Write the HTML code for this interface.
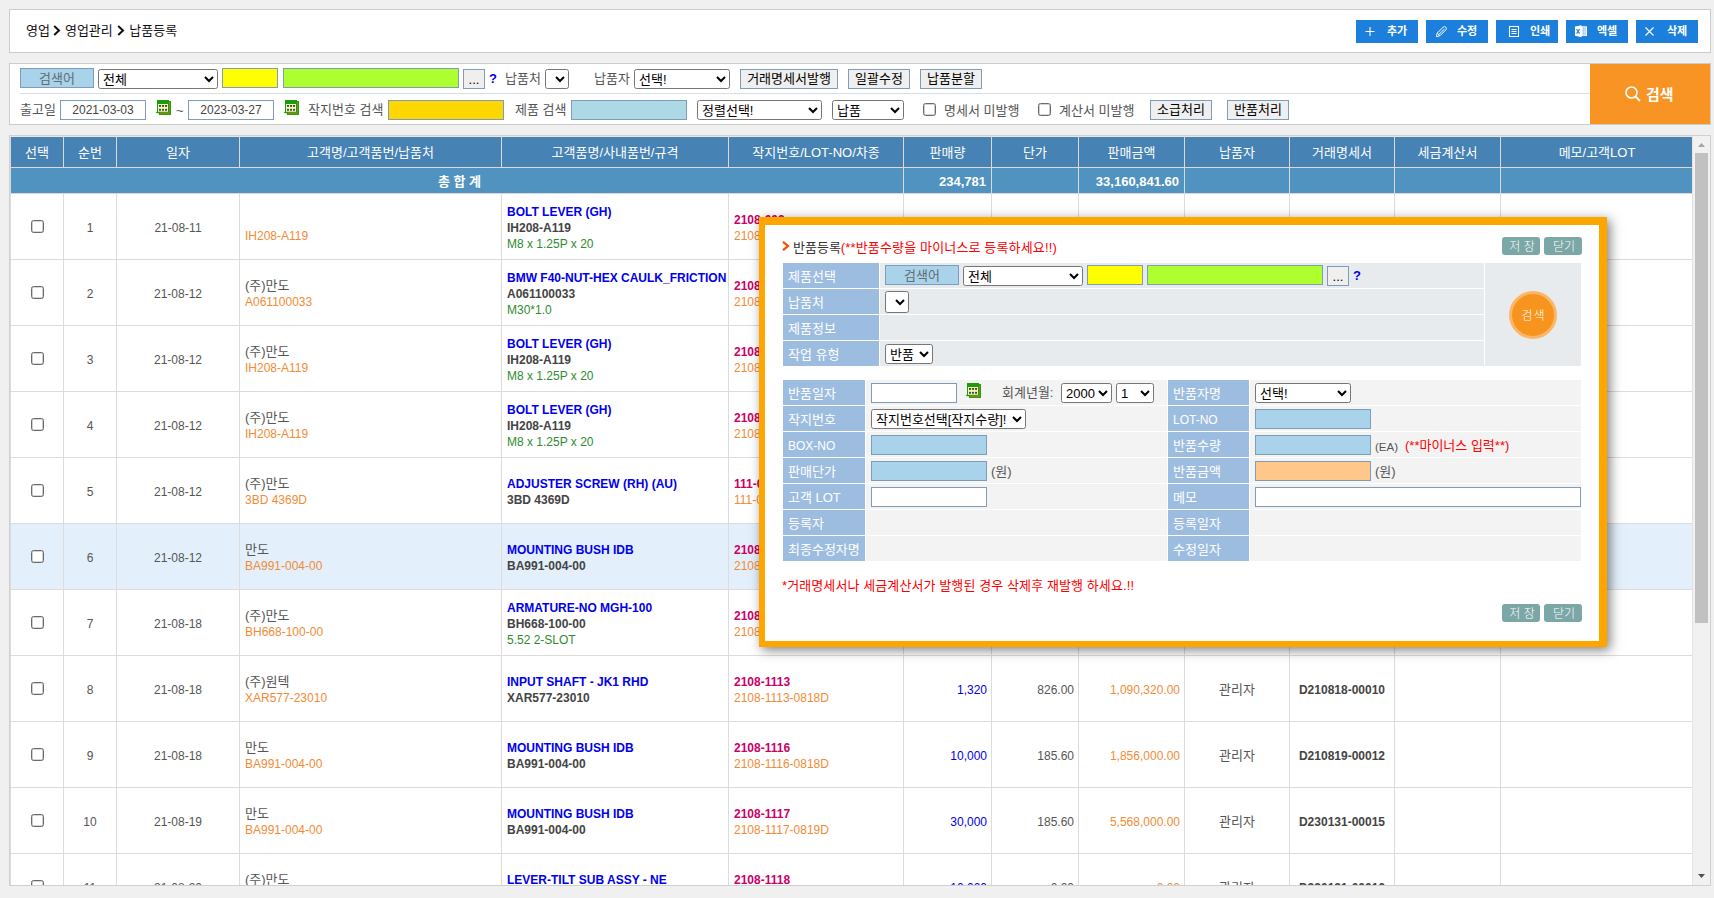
<!DOCTYPE html>
<html lang="ko">
<head>
<meta charset="utf-8">
<title>납품등록</title>
<style>
*{box-sizing:border-box;}
html,body{margin:0;padding:0;}
body{width:1714px;height:898px;overflow:hidden;background:#f0f0f0;position:relative;
 font-family:"Liberation Sans","Noto Sans CJK KR",sans-serif;font-size:12px;color:#333;}
.abs{position:absolute;}
/* top bar */
#topbar{left:9px;top:9px;width:1702px;height:44px;background:#fff;border:1px solid #ccc;}
#crumb{left:16px;top:13px;font-size:13px;color:#111;white-space:nowrap;line-height:16px;}
#crumb svg{vertical-align:-1px;margin:0 4px 0 3px;}
.tbtn{position:absolute;top:10px;width:62px;height:23px;background:#1b7fdb;color:#fff;font-size:11px;font-weight:bold;line-height:23px;white-space:nowrap;}
.tbtn svg{position:absolute;left:0;top:0;}
.tbtn span{position:absolute;left:30px;top:0;}
/* search panel */
#search{left:9px;top:63px;width:1702px;height:62px;background:#fff;border:1px solid #ccc;}
#search .line{position:absolute;left:10px;width:1570px;top:29px;height:1px;background:#d5dde5;}
#sbtn{left:1590px;top:64px;width:120px;height:60px;background:#f89424;color:#fff;font-weight:bold;font-size:15px;}
.lbl{position:absolute;background:#a8d3ea;border:1px solid #7f9db9;color:#636b72;text-align:center;font-size:13px;}
.inp{position:absolute;border:1px solid #7f9db9;background:#fff;font-size:12px;text-align:center;color:#444;}
select{position:absolute;font-family:inherit;font-size:13px;color:#000;background:#fff;border:1px solid #767676;border-radius:2.5px;padding:0;margin:0;}
.txt{position:absolute;white-space:nowrap;font-size:13px;color:#555;line-height:16px;}
.gbtn{position:absolute;background:#efefef;border:1px solid #7f9db9;font-size:13px;color:#000;text-align:center;white-space:nowrap;}
input[type=checkbox]{position:absolute;margin:0;width:13px;height:13px;-webkit-appearance:none;appearance:none;border:1px solid #6a6a6a;border-radius:2.5px;background:#fff;box-shadow:inset 0 0 0 .6px rgba(106,106,106,.55);}
input.cb{position:relative;top:-2px;vertical-align:middle;}
table.grid .k,.k{font-size:13px;}
/* grid */
#gridwrap{left:9px;top:135px;width:1702px;height:751px;background:#fff;border:1px solid #d0d0d0;overflow:hidden;}
table.grid{position:absolute;left:0;top:0;border-collapse:collapse;table-layout:fixed;width:1683px;}
table.grid th{background:#4682b4;color:#fff;font-weight:normal;font-size:13px;height:31px;border:1px solid #d9d9d9;border-top:1px solid #e8e8e8;padding:0 0 2px 0;}
table.grid tr.sum td{background:#5193c0;color:#fff;font-weight:bold;font-size:13px;height:26px;border:1px solid #d9d9d9;padding:2px 5px 0 0;text-align:right;}
table.grid tr.sum td.c{text-align:center;padding-left:10px;}
table.grid td{height:66px;border:1px solid #dcdcdc;padding:2px 5px 0 5px;font-size:12px;line-height:16px;color:#555;vertical-align:middle;white-space:nowrap;overflow:hidden;}
table.grid td.c{text-align:center;}
table.grid td.r{text-align:right;padding-right:4px;}
tr.hl td{background:#e3f0fb;}
table.grid .or,.or{color:#f28b36;}
table.grid .bl,.bl{color:#0000ee;font-weight:bold;}
table.grid .bk,.bk{color:#444;font-weight:bold;}
table.grid .gr,.gr{color:#2e8b2e;}
table.grid .rd,.rd{color:#cc0066;font-weight:bold;}
table.grid .qb,.qb{color:#0000ee;}
/* scrollbar */
#sb{left:1692px;top:136px;width:18px;height:749px;background:#f1f1f1;border-left:1px solid #e4e4e4;}
#sb .thumb{position:absolute;left:2px;top:17px;width:13px;height:470px;background:#c1c1c1;}
#sb svg{position:absolute;left:5px;}
/* modal */
#modal{left:759px;top:217px;width:848px;height:430px;background:#fff;border-style:solid;border-color:#ffa500;border-width:8px 8px 6px 6px;box-shadow:3px 3px 11px rgba(0,0,0,.5);}
#modal .in{position:absolute;left:-765px;top:-225px;width:0;height:0;font-family:"Liberation Sans","Noto Sans CJK KR",sans-serif;}
.ml{position:absolute;background:#9dbde0;color:#fff;font-size:13px;padding-left:5px;padding-top:1px;white-space:nowrap;overflow:hidden;}
.mc{position:absolute;background:#e8ebee;}
.mc2{position:absolute;background:#f3f3f3;}
.mbtn{position:absolute;width:38px;height:18px;background:#7ba7a7;border-radius:3px;color:#fff;font-size:12px;font-weight:300;line-height:20px;text-align:center;white-space:nowrap;padding-left:2px;overflow:hidden;}
.mt{font-size:13px;color:#333;white-space:nowrap;line-height:18px;}
.circ{width:48px;height:48px;border-radius:50%;background:#f7941d;border:3px solid #fbb768;color:#fff;font-size:12px;font-weight:300;letter-spacing:1px;padding-left:1px;line-height:44px;text-align:center;white-space:nowrap;}
</style>
</head>
<body>
<svg width="0" height="0" style="position:absolute"><defs>
<g id="calico">
 <rect x="4.5" y="1.5" width="11" height="13" fill="#7c8f1c" stroke="#2f9a0c" stroke-width="1"/>
 <path d="M0.6 13 L2.2 11.2 L5 12 L5 13.4 Z" fill="#2f9a0c"/>
 <rect x="2" y="0" width="12" height="12.3" fill="#1f9a08"/>
 <rect x="3" y="4" width="10" height="7.8" fill="#eef0c0"/>
 <g fill="#2c3a0c"><rect x="4.1" y="5" width="1.8" height="1.8"/><rect x="7.1" y="5" width="1.8" height="1.8"/><rect x="10.1" y="5" width="1.8" height="1.8"/><rect x="4.1" y="8.9" width="1.8" height="1.8"/><rect x="7.1" y="8.9" width="1.8" height="1.8"/><rect x="10.1" y="8.9" width="1.8" height="1.8"/></g>
</g></defs></svg>
<!-- TOPBAR -->
<div id="topbar" class="abs">
 <div id="crumb" class="abs">영업<svg width="8" height="11" viewBox="0 0 8 11"><path d="M1.2 1 L6 5.5 L1.2 10" fill="none" stroke="#111" stroke-width="2"/></svg>영업관리<svg style="margin-left:4.5px" width="8" height="11" viewBox="0 0 8 11"><path d="M1.2 1 L6 5.5 L1.2 10" fill="none" stroke="#111" stroke-width="2"/></svg>납품등록</div>
 <div class="tbtn" style="left:1346px"><svg width="62" height="23"><path d="M9.5 11.5h9M14 7v9" stroke="#fff" stroke-width="1.1" fill="none"/></svg><span style="left:31px">추가</span></div>
 <div class="tbtn" style="left:1416px"><svg width="62" height="23"><g fill="none" stroke="#fff" stroke-width="1"><path d="M10.5 15.5 L11.3 13 L17.3 7 Q18.5 6 19.8 7.2 Q21 8.5 20 9.7 L14 15.7 L10.5 16.6 Z"/><path d="M12.8 14.6 L18.6 8.8"/><path d="M11.3 13.2 L13.9 15.6"/></g></svg><span style="left:31px">수정</span></div>
 <div class="tbtn" style="left:1486px"><svg width="62" height="23"><g fill="none" stroke="#fff" stroke-width="1.1"><rect x="13.5" y="6.5" width="9" height="10"/><path d="M15.5 9.5h5M15.5 11.5h5M15.5 13.5h5" stroke-width="1"/></g></svg><span style="left:34px">인쇄</span></div>
 <div class="tbtn" style="left:1556px"><svg width="62" height="23"><g><path d="M9 6.6 L15.5 5.2 V17.2 L9 15.8 Z" fill="#fff"/><path d="M10.6 9 L13.6 13.6 M13.6 9 L10.6 13.6" stroke="#1b7fdb" stroke-width="1.1" fill="none"/><rect x="15.5" y="6.8" width="5" height="8.8" fill="#fff" stroke="#fff" stroke-width="0.9"/><path d="M17.2 7v8.4M19 7v8.4" stroke="#5a9fe6" stroke-width="0.7"/></g></svg><span style="left:31px">엑셀</span></div>
 <div class="tbtn" style="left:1626px"><svg width="62" height="23"><path d="M9.5 7.5l8 8M17.5 7.5l-8 8" stroke="#fff" stroke-width="1.1" fill="none"/></svg><span style="left:31px">삭제</span></div>
</div>
<!-- SEARCH -->
<div id="search" class="abs"><div class="line"></div></div>
<div id="sbtn" class="abs"><svg class="abs" style="left:34px;top:21px" width="18" height="18" viewBox="0 0 18 18"><circle cx="7.5" cy="7.5" r="5.5" fill="none" stroke="#fff" stroke-width="1.6"/><path d="M11.5 11.5 L16 16" stroke="#fff" stroke-width="1.8"/></svg><span class="abs" style="left:56px;top:21px;line-height:20px;white-space:nowrap">검색</span></div>
<div id="sf" class="abs" style="left:0;top:0;width:0;height:0">
 <div class="lbl" style="left:20px;top:68px;width:74px;height:20px;line-height:20px">검색어</div>
 <select style="left:98px;top:69px;width:120px;height:20px"><option>전체</option></select>
 <div class="inp" style="left:222px;top:68px;width:56px;height:20px;background:#ffff00"></div>
 <div class="inp" style="left:283px;top:68px;width:176px;height:20px;background:#adff2f"></div>
 <div class="gbtn" style="left:463px;top:69px;width:22px;height:20px;line-height:20px">...</div>
 <div class="txt qb" style="left:489px;top:71px;font-weight:bold">?</div>
 <div class="txt" style="left:505px;top:71px">납품처</div>
 <select style="left:545px;top:69px;width:24px;height:20px"><option></option></select>
 <div class="txt" style="left:594px;top:71px">납품자</div>
 <select style="left:634px;top:69px;width:96px;height:20px"><option>선택!</option></select>
 <div class="gbtn" style="left:740px;top:69px;width:98px;height:20px;line-height:18px">거래명세서발행</div>
 <div class="gbtn" style="left:848px;top:69px;width:62px;height:20px;line-height:18px">일괄수정</div>
 <div class="gbtn" style="left:920px;top:69px;width:62px;height:20px;line-height:18px">납품분할</div>

 <div class="txt" style="left:20px;top:102px">출고일</div>
 <div class="inp" style="left:60px;top:100px;width:86px;height:20px;line-height:19px">2021-03-03</div>
 <svg class="abs cal" style="left:155px;top:100px" width="17" height="16" viewBox="0 0 17 16"><use href="#calico"/></svg>
 <div class="txt" style="left:176px;top:103px">~</div>
 <div class="inp" style="left:188px;top:100px;width:86px;height:20px;line-height:19px">2023-03-27</div>
 <svg class="abs cal" style="left:283px;top:100px" width="17" height="16" viewBox="0 0 17 16"><use href="#calico"/></svg>
 <div class="txt" style="left:308px;top:102px">작지번호 검색</div>
 <div class="inp" style="left:388px;top:100px;width:116px;height:20px;background:#ffd700"></div>
 <div class="txt" style="left:515px;top:102px">제품 검색</div>
 <div class="inp" style="left:571px;top:100px;width:116px;height:20px;background:#add8e6"></div>
 <select style="left:697px;top:100px;width:125px;height:20px"><option>정렬선택!</option></select>
 <select style="left:832px;top:100px;width:72px;height:20px"><option>납품</option></select>
 <input type="checkbox" style="left:923px;top:103px">
 <div class="txt" style="left:944px;top:103px">명세서 미발행</div>
 <input type="checkbox" style="left:1038px;top:103px">
 <div class="txt" style="left:1059px;top:103px">계산서 미발행</div>
 <div class="gbtn" style="left:1150px;top:100px;width:62px;height:20px;line-height:18px">소급처리</div>
 <div class="gbtn" style="left:1227px;top:100px;width:62px;height:20px;line-height:18px">반품처리</div>
</div>

<!-- GRID -->
<div id="gridwrap" class="abs">
<table class="grid"><colgroup><col style="width:53px"><col style="width:53px"><col style="width:123px"><col style="width:262px"><col style="width:227px"><col style="width:175px"><col style="width:88px"><col style="width:87px"><col style="width:106px"><col style="width:105px"><col style="width:105px"><col style="width:106px"><col style="width:193px"></colgroup>
<tr><th>선택</th><th>순번</th><th>일자</th><th>고객명/고객품번/납품처</th><th>고객품명/사내품번/규격</th><th>작지번호/LOT-NO/차종</th><th>판매량</th><th>단가</th><th>판매금액</th><th>납품자</th><th>거래명세서</th><th>세금계산서</th><th>메모/고객LOT</th></tr>
<tr class="sum"><td colspan="6" class="c">총 합 계</td><td>234,781</td><td></td><td>33,160,841.60</td><td></td><td></td><td></td><td></td></tr>
<tr><td class="c"><input type="checkbox" class="cb"></td><td class="c">1</td><td class="c">21-08-11</td><td><br><span class="or">IH208-A119</span></td><td><span class="bl">BOLT LEVER (GH)</span><br><span class="bk">IH208-A119</span><br><span class="gr">M8 x 1.25P x 20</span></td><td><span class="rd">2108-002</span><br><span class="or">2108-002-0811D</span></td><td class="r qb">2,000</td><td class="r">62.00</td><td class="r or">124,000.00</td><td class="c k">관리자</td><td class="c bk">D210811-00003</td><td></td><td></td></tr>
<tr><td class="c"><input type="checkbox" class="cb"></td><td class="c">2</td><td class="c">21-08-12</td><td><span class="k">(주)만도</span><br><span class="or">A061100033</span></td><td><span class="bl">BMW F40-NUT-HEX CAULK_FRICTION</span><br><span class="bk">A061100033</span><br><span class="gr">M30*1.0</span></td><td><span class="rd">2108-1003</span><br><span class="or">2108-1003-0812D</span></td><td class="r qb">5,000</td><td class="r">152.00</td><td class="r or">760,000.00</td><td class="c k">관리자</td><td class="c bk">D210812-00004</td><td></td><td></td></tr>
<tr><td class="c"><input type="checkbox" class="cb"></td><td class="c">3</td><td class="c">21-08-12</td><td><span class="k">(주)만도</span><br><span class="or">IH208-A119</span></td><td><span class="bl">BOLT LEVER (GH)</span><br><span class="bk">IH208-A119</span><br><span class="gr">M8 x 1.25P x 20</span></td><td><span class="rd">2108-1004</span><br><span class="or">2108-1004-0812D</span></td><td class="r qb">3,000</td><td class="r">62.00</td><td class="r or">186,000.00</td><td class="c k">관리자</td><td class="c bk">D210812-00004</td><td></td><td></td></tr>
<tr><td class="c"><input type="checkbox" class="cb"></td><td class="c">4</td><td class="c">21-08-12</td><td><span class="k">(주)만도</span><br><span class="or">IH208-A119</span></td><td><span class="bl">BOLT LEVER (GH)</span><br><span class="bk">IH208-A119</span><br><span class="gr">M8 x 1.25P x 20</span></td><td><span class="rd">2108-1005</span><br><span class="or">2108-1005-0812D</span></td><td class="r qb">3,000</td><td class="r">62.00</td><td class="r or">186,000.00</td><td class="c k">관리자</td><td class="c bk">D210812-00004</td><td></td><td></td></tr>
<tr><td class="c"><input type="checkbox" class="cb"></td><td class="c">5</td><td class="c">21-08-12</td><td><span class="k">(주)만도</span><br><span class="or">3BD 4369D</span></td><td><span class="bl">ADJUSTER SCREW (RH) (AU)</span><br><span class="bk">3BD 4369D</span></td><td><span class="rd">111-0001</span><br><span class="or">111-0001-0812D</span></td><td class="r qb">1,000</td><td class="r">95.00</td><td class="r or">95,000.00</td><td class="c k">관리자</td><td class="c bk">D210812-00004</td><td></td><td></td></tr>
<tr class="hl"><td class="c"><input type="checkbox" class="cb"></td><td class="c">6</td><td class="c">21-08-12</td><td><span class="k">만도</span><br><span class="or">BA991-004-00</span></td><td><span class="bl">MOUNTING BUSH IDB</span><br><span class="bk">BA991-004-00</span></td><td><span class="rd">2108-1101</span><br><span class="or">2108-1101-0812D</span></td><td class="r qb">10,000</td><td class="r">185.60</td><td class="r or">1,856,000.00</td><td class="c k">관리자</td><td class="c bk">D210812-00005</td><td></td><td></td></tr>
<tr><td class="c"><input type="checkbox" class="cb"></td><td class="c">7</td><td class="c">21-08-18</td><td><span class="k">(주)만도</span><br><span class="or">BH668-100-00</span></td><td><span class="bl">ARMATURE-NO MGH-100</span><br><span class="bk">BH668-100-00</span><br><span class="gr">5.52 2-SLOT</span></td><td><span class="rd">2108-1110</span><br><span class="or">2108-1110-0818D</span></td><td class="r qb">2,400</td><td class="r">310.00</td><td class="r or">744,000.00</td><td class="c k">관리자</td><td class="c bk">D210818-00009</td><td></td><td></td></tr>
<tr><td class="c"><input type="checkbox" class="cb"></td><td class="c">8</td><td class="c">21-08-18</td><td><span class="k">(주)원텍</span><br><span class="or">XAR577-23010</span></td><td><span class="bl">INPUT SHAFT - JK1 RHD</span><br><span class="bk">XAR577-23010</span></td><td><span class="rd">2108-1113</span><br><span class="or">2108-1113-0818D</span></td><td class="r qb">1,320</td><td class="r">826.00</td><td class="r or">1,090,320.00</td><td class="c k">관리자</td><td class="c bk">D210818-00010</td><td></td><td></td></tr>
<tr><td class="c"><input type="checkbox" class="cb"></td><td class="c">9</td><td class="c">21-08-18</td><td><span class="k">만도</span><br><span class="or">BA991-004-00</span></td><td><span class="bl">MOUNTING BUSH IDB</span><br><span class="bk">BA991-004-00</span></td><td><span class="rd">2108-1116</span><br><span class="or">2108-1116-0818D</span></td><td class="r qb">10,000</td><td class="r">185.60</td><td class="r or">1,856,000.00</td><td class="c k">관리자</td><td class="c bk">D210819-00012</td><td></td><td></td></tr>
<tr><td class="c"><input type="checkbox" class="cb"></td><td class="c">10</td><td class="c">21-08-19</td><td><span class="k">만도</span><br><span class="or">BA991-004-00</span></td><td><span class="bl">MOUNTING BUSH IDB</span><br><span class="bk">BA991-004-00</span></td><td><span class="rd">2108-1117</span><br><span class="or">2108-1117-0819D</span></td><td class="r qb">30,000</td><td class="r">185.60</td><td class="r or">5,568,000.00</td><td class="c k">관리자</td><td class="c bk">D230131-00015</td><td></td><td></td></tr>
<tr><td class="c"><input type="checkbox" class="cb"></td><td class="c">11</td><td class="c">21-08-20</td><td><span class="k">(주)만도</span><br><span class="or">BA991-005-00</span></td><td><span class="bl">LEVER-TILT SUB ASSY - NE</span><br><span class="bk">BA991-005-00</span></td><td><span class="rd">2108-1118</span><br><span class="or">2108-1118-0820D</span></td><td class="r qb">10,000</td><td class="r">0.00</td><td class="r or">0.00</td><td class="c k">관리자</td><td class="c bk">D230131-00016</td><td></td><td></td></tr>
</table>
</div>
<div id="sb" class="abs"><svg style="top:7px" width="7" height="4" viewBox="0 0 7 4"><path d="M0 4 L3.5 0 L7 4Z" fill="#a3a3a3"/></svg><div class="thumb"></div><svg style="top:738px" width="7" height="4" viewBox="0 0 7 4"><path d="M0 0 L7 0 L3.5 4Z" fill="#505050"/></svg></div>
<!-- MODAL -->
<div id="modal" class="abs"><div class="in">
<svg class="abs" style="left:782px;top:241px" width="8" height="10" viewBox="0 0 8 10"><path d="M1 0.8 L6 5 L1 9.2" fill="none" stroke="#ff4a00" stroke-width="2.2"/></svg>
<div class="abs mt" style="left:793px;top:239px">반품등록<span style="color:#f00;letter-spacing:.15px">(**반품수량을 마이너스로 등록하세요!!)</span></div>
<div class="mbtn" style="left:1502px;top:237px">저 장</div><div class="mbtn" style="left:1544px;top:237px">닫기</div>
<div class="ml" style="left:783px;top:263px;width:96px;height:25px;line-height:25px">제품선택</div>
<div class="mc" style="left:880px;top:263px;width:604px;height:25px"></div>
<div class="ml" style="left:783px;top:289px;width:96px;height:25px;line-height:25px">납품처</div>
<div class="mc" style="left:880px;top:289px;width:604px;height:25px"></div>
<div class="ml" style="left:783px;top:315px;width:96px;height:25px;line-height:25px">제품정보</div>
<div class="mc" style="left:880px;top:315px;width:604px;height:25px"></div>
<div class="ml" style="left:783px;top:341px;width:96px;height:25px;line-height:25px">작업 유형</div>
<div class="mc" style="left:880px;top:341px;width:604px;height:25px"></div>
<div class="mc" style="left:1485px;top:263px;width:96px;height:103px"></div>
<div class="abs circ" style="left:1509px;top:291px">검색</div>
<div class="lbl" style="left:885px;top:265px;width:74px;height:20px;line-height:19px">검색어</div>
<select style="left:963px;top:266px;width:120px;height:20px"><option>전체</option></select>
<div class="inp" style="left:1087px;top:265px;width:56px;height:20px;background:#ffff00"></div>
<div class="inp" style="left:1147px;top:265px;width:176px;height:20px;background:#adff2f"></div>
<div class="gbtn" style="left:1327px;top:266px;width:22px;height:20px;line-height:20px">...</div>
<div class="txt qb" style="left:1353px;top:268px;font-weight:bold">?</div>
<select style="left:885px;top:291px;width:24px;height:22px"><option></option></select>
<select style="left:885px;top:344px;width:48px;height:20px"><option>반품</option></select>
<div class="ml" style="left:783px;top:380px;width:82px;height:25px;line-height:25px">반품일자</div>
<div class="mc2 L" style="left:866px;top:380px;width:301px;height:25px"></div>
<div class="ml" style="left:1168px;top:380px;width:81px;height:25px;line-height:25px">반품자명</div>
<div class="mc2" style="left:1250px;top:380px;width:331px;height:25px"></div>
<div class="ml" style="left:783px;top:406px;width:82px;height:25px;line-height:25px">작지번호</div>
<div class="mc2 L" style="left:866px;top:406px;width:301px;height:25px"></div>
<div class="ml" style="left:1168px;top:406px;width:81px;height:25px;line-height:27px;font-size:12px">LOT-NO</div>
<div class="mc2" style="left:1250px;top:406px;width:331px;height:25px"></div>
<div class="ml" style="left:783px;top:432px;width:82px;height:25px;line-height:27px;font-size:12px">BOX-NO</div>
<div class="mc2 L" style="left:866px;top:432px;width:301px;height:25px"></div>
<div class="ml" style="left:1168px;top:432px;width:81px;height:25px;line-height:25px">반품수량</div>
<div class="mc2" style="left:1250px;top:432px;width:331px;height:25px"></div>
<div class="ml" style="left:783px;top:458px;width:82px;height:25px;line-height:25px">판매단가</div>
<div class="mc2 L" style="left:866px;top:458px;width:301px;height:25px"></div>
<div class="ml" style="left:1168px;top:458px;width:81px;height:25px;line-height:25px">반품금액</div>
<div class="mc2" style="left:1250px;top:458px;width:331px;height:25px"></div>
<div class="ml" style="left:783px;top:484px;width:82px;height:25px;line-height:25px">고객 LOT</div>
<div class="mc2 L" style="left:866px;top:484px;width:301px;height:25px"></div>
<div class="ml" style="left:1168px;top:484px;width:81px;height:25px;line-height:25px">메모</div>
<div class="mc2" style="left:1250px;top:484px;width:331px;height:25px"></div>
<div class="ml" style="left:783px;top:510px;width:82px;height:25px;line-height:25px">등록자</div>
<div class="mc2 L" style="left:866px;top:510px;width:301px;height:25px"></div>
<div class="ml" style="left:1168px;top:510px;width:81px;height:25px;line-height:25px">등록일자</div>
<div class="mc2" style="left:1250px;top:510px;width:331px;height:25px"></div>
<div class="ml" style="left:783px;top:536px;width:82px;height:25px;line-height:25px">최종수정자명</div>
<div class="mc2 L" style="left:866px;top:536px;width:301px;height:25px"></div>
<div class="ml" style="left:1168px;top:536px;width:81px;height:25px;line-height:25px">수정일자</div>
<div class="mc2" style="left:1250px;top:536px;width:331px;height:25px"></div>
<div class="inp" style="left:871px;top:383px;width:86px;height:20px"></div>
<svg class="abs cal" style="left:965px;top:383px" width="17" height="16" viewBox="0 0 17 16"><use href="#calico"/></svg>
<div class="txt" style="left:1002px;top:385px">회계년월:</div>
<select style="left:1061px;top:383px;width:51px;height:20px"><option>2000</option></select>
<select style="left:1116px;top:383px;width:38px;height:20px"><option>1</option></select>
<select style="left:871px;top:409px;width:155px;height:20px"><option>작지번호선택[작지수량]!</option></select>
<div class="inp" style="left:871px;top:435px;width:116px;height:20px;background:#a8d3ea"></div>
<div class="inp" style="left:871px;top:461px;width:116px;height:20px;background:#a8d3ea"></div>
<div class="txt" style="left:991px;top:464px">(원)</div>
<div class="inp" style="left:871px;top:487px;width:116px;height:20px"></div>
<select style="left:1255px;top:383px;width:96px;height:20px"><option>선택!</option></select>
<div class="inp" style="left:1255px;top:409px;width:116px;height:20px;background:#a8d3ea"></div>
<div class="inp" style="left:1255px;top:435px;width:116px;height:20px;background:#a8d3ea"></div>
<div class="txt" style="left:1375px;top:439px;font-size:11.5px">(EA)</div>
<div class="txt" style="left:1405px;top:438px;color:#f00">(**마이너스 입력**)</div>
<div class="inp" style="left:1255px;top:461px;width:116px;height:20px;background:#ffc88a"></div>
<div class="txt" style="left:1375px;top:464px">(원)</div>
<div class="inp" style="left:1255px;top:487px;width:326px;height:20px"></div>
<div class="abs mt" style="left:782px;top:577px;color:#f00;letter-spacing:.1px">*거래명세서나 세금계산서가 발행된 경우 삭제후 재발행 하세요.!!</div>
<div class="mbtn" style="left:1502px;top:604px">저 장</div><div class="mbtn" style="left:1544px;top:604px">닫기</div>
</div></div>
</body>
</html>
